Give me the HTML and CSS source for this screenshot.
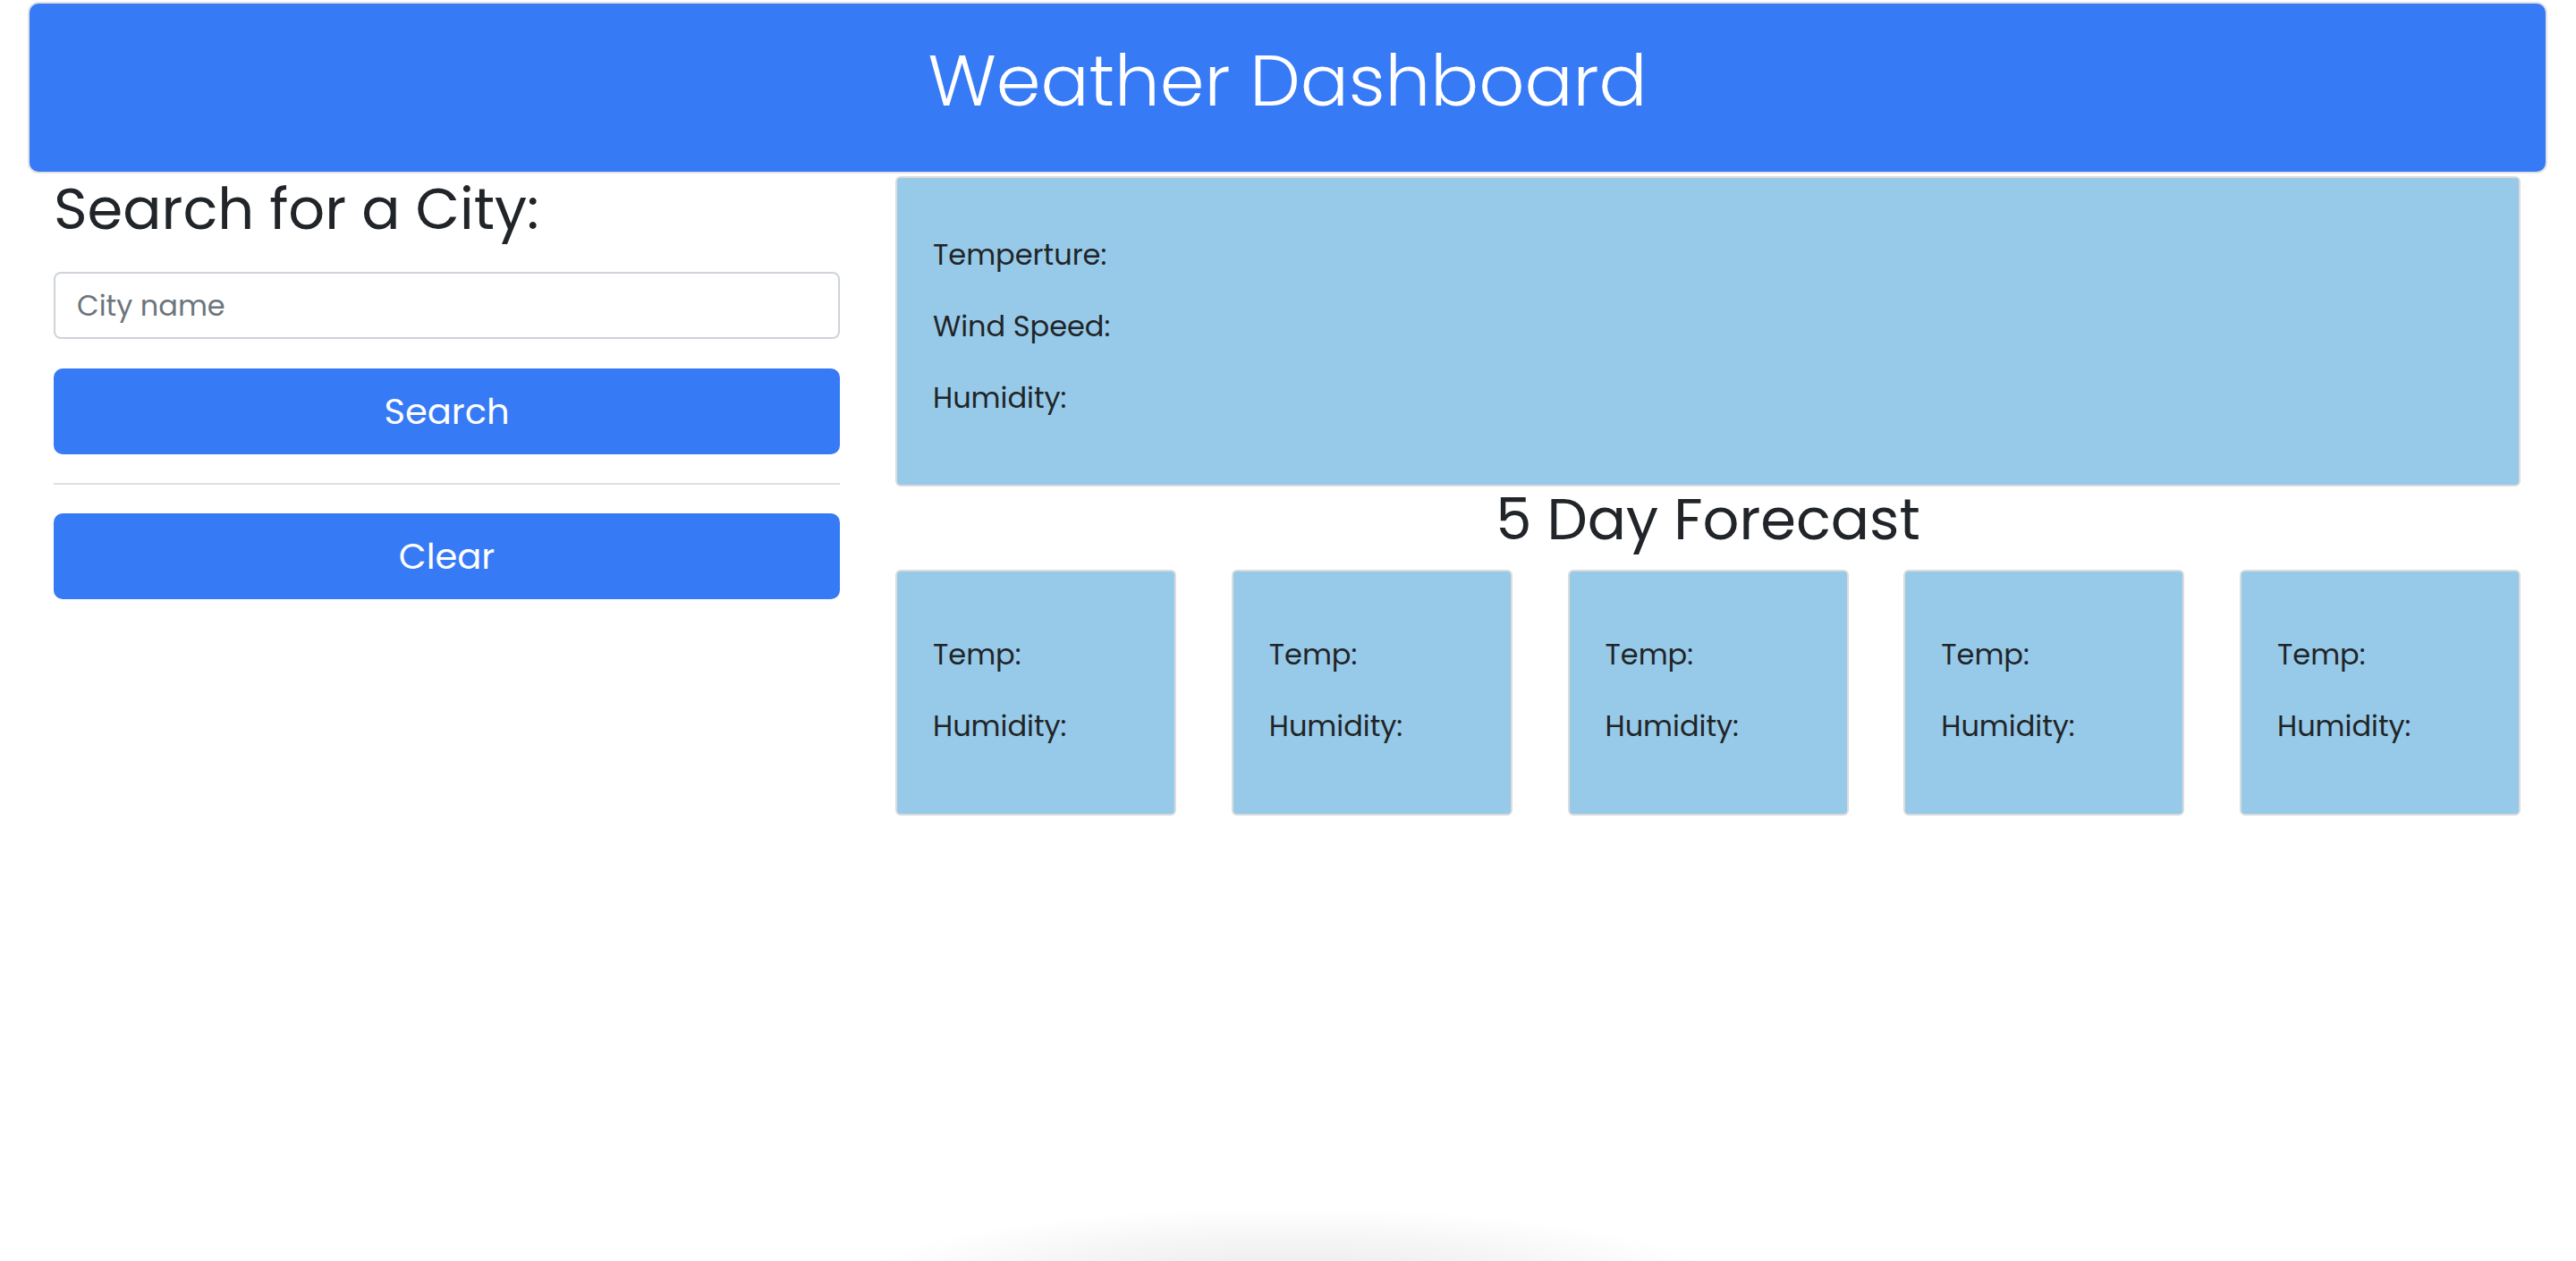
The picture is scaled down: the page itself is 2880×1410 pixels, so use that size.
FILE: index.html
```html
<!DOCTYPE html>
<html lang="en">
<head>
<meta charset="utf-8">
<title>Weather Dashboard</title>
<link rel="stylesheet" href="styles.css">
</head>
<body>
<header class="banner">
  <h1 class="banner-title">Weather Dashboard</h1>
</header>
<main class="layout">
  <section class="sidebar">
    <h2 class="search-title">Search for a City:</h2>
    <input class="city-input" type="text" placeholder="City name">
    <button class="btn" type="button">Search</button>
    <hr class="divider">
    <button class="btn" type="button">Clear</button>
  </section>
  <section class="content">
    <div class="current">
      <p class="stat">Temperture:</p>
      <p class="stat">Wind Speed:</p>
      <p class="stat">Humidity:</p>
    </div>
    <h2 class="forecast-title">5 Day Forecast</h2>
    <div class="forecast">
      <div class="day"><p class="stat">Temp:</p><p class="stat">Humidity:</p></div>
      <div class="day"><p class="stat">Temp:</p><p class="stat">Humidity:</p></div>
      <div class="day"><p class="stat">Temp:</p><p class="stat">Humidity:</p></div>
      <div class="day"><p class="stat">Temp:</p><p class="stat">Humidity:</p></div>
      <div class="day"><p class="stat">Temp:</p><p class="stat">Humidity:</p></div>
    </div>
  </section>
</main>
<div class="floor-shadow"></div>
</body>
</html>
```
FILE: styles.css
```css
* { box-sizing: border-box; }

html, body {
  margin: 0;
  padding: 0;
  background: #ffffff;
}

body {
  font-family: "Poppins", "Inter", "Liberation Sans", sans-serif;
  color: #212529;
  font-size: 32px;
  overflow: hidden;
  height: 1410px;
}

.banner {
  margin: 2px 32px 0 31px;
  height: 192px;
  background: #377af6;
  border: 2px solid #e2e2e2;
  border-radius: 12px;
  padding-top: 40px;
  text-align: center;
}

.banner-title {
  margin: 0;
  font-size: 80px;
  line-height: 92px;
  font-weight: 300;
  color: #ffffff;
}

.layout {
  display: grid;
  grid-template-columns: 879px 1fr;
  column-gap: 62px;
  padding: 0 62px 0 60px;
}

.sidebar {
  display: flex;
  flex-direction: column;
}

.search-title {
  margin: 0 0 30px 0;
  font-size: 64px;
  line-height: 80px;
  font-weight: 400;
}

.city-input {
  height: 75px;
  border: 2px solid #ced4da;
  border-radius: 8px;
  padding: 0 24px;
  font-family: inherit;
  font-size: 32px;
  color: #212529;
  background: #fff;
  outline: none;
}

.city-input::placeholder {
  color: #6c757d;
}

.btn {
  margin-top: 33px;
  height: 96px;
  border: 2px solid #377af6;
  border-radius: 10px;
  background: #377af6;
  color: #ffffff;
  font-family: inherit;
  font-size: 40px;
  font-weight: 400;
}

.divider {
  margin: 32px 0 0 0;
  border: 0;
  border-top: 2px solid #dedede;
  height: 0;
}

.divider + .btn {
  margin-top: 32px;
}

.content {
  padding-top: 3px;
  display: flex;
  flex-direction: column;
}

.current {
  background: #97cae8;
  border: 2px solid #dcdcdc;
  border-radius: 6px;
  padding: 62px 40px 41px 40px;
}

.stat {
  margin: 0 0 32px 0;
  font-size: 32px;
  line-height: 48px;
}

.forecast-title {
  margin: 0 0 20px 0;
  text-align: center;
  font-size: 64px;
  line-height: 73px;
  font-weight: 400;
}

.forecast {
  display: grid;
  grid-template-columns: repeat(5, 314px);
  justify-content: space-between;
}

.day {
  height: 275px;
  background: #97cae8;
  border: 2px solid #dcdcdc;
  border-radius: 6px;
  padding: 69px 40px 42px 40px;
}

.floor-shadow {
  position: fixed;
  left: 960px;
  bottom: -20px;
  width: 960px;
  height: 80px;
  background: radial-gradient(ellipse at 50% 100%, rgba(0,0,0,0.08) 0%, rgba(0,0,0,0.04) 40%, rgba(0,0,0,0) 70%);
  pointer-events: none;
}
```
